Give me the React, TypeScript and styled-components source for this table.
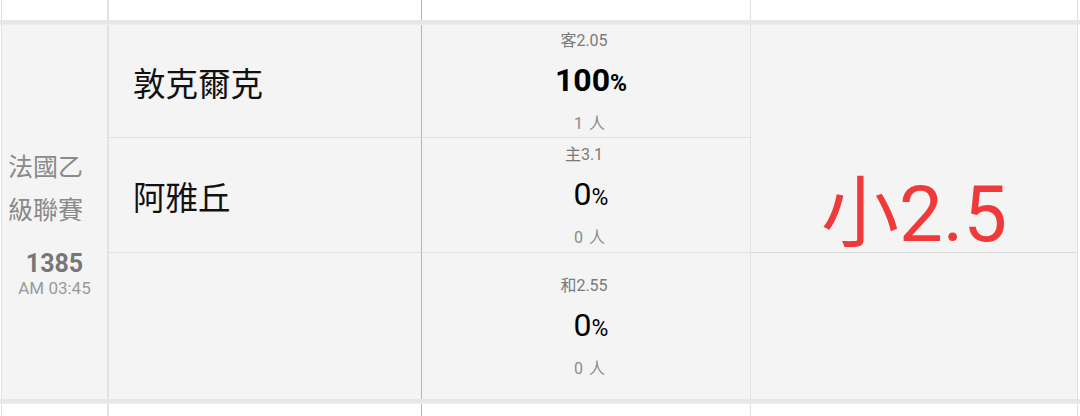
import React from 'react'
import styled, { createGlobalStyle } from 'styled-components'

const GlobalStyle = createGlobalStyle`
  *, *::before, *::after {
    box-sizing: border-box;
  }
  html, body {
    margin: 0;
    padding: 0;
    background: #ffffff;
    overflow: hidden;
  }
  body {
    font-family: Roboto, "Noto Sans CJK TC", "Noto Sans", sans-serif;
  }
`

const List = styled.div`
  width: 1080px;
  height: 416px;
  display: flex;
  flex-direction: column;
  overflow: hidden;
`

const Separator = styled.div`
  height: 5px;
  flex-shrink: 0;
  background: #e7e7e7;
  border-bottom: 1px solid #ededed;
`

const Row = styled.div<{ $height?: number; $filled?: boolean }>`
  display: flex;
  flex-shrink: 0;
  height: ${({ $height }) => ($height ? `${$height}px` : 'auto')};
  flex-grow: ${({ $height }) => ($height ? 0 : 1)};
  margin: 0 2px 0 1px;
  background: ${({ $filled }) => ($filled ? '#f4f4f4' : '#ffffff')};
  border-left: 1px solid #e0e0e0;
  border-right: 1px solid #e0e0e0;
`

const LeagueCell = styled.div`
  width: 107px;
  flex-shrink: 0;
  display: flex;
  flex-direction: column;
  justify-content: center;
  padding-top: 20px;
  border-right: 2px solid #e2e2e2;
`

const LeagueName = styled.div`
  width: 92px;
  padding-left: 6px;
  font-size: 25px;
  line-height: 43px;
  color: #8a8a8a;
`

const MatchNo = styled.div`
  margin-top: 18px;
  text-align: center;
  font-size: 25px;
  line-height: 28px;
  font-weight: 700;
  color: #777777;
`

const MatchTime = styled.div`
  text-align: center;
  font-size: 17px;
  line-height: 20px;
  color: #9a9a9a;
`

const Board = styled.div`
  display: grid;
  grid-template-columns: 313px 329px;
  grid-template-rows: 113px 115px 1fr;
`

const TeamCell = styled.div<{ $last?: boolean }>`
  display: flex;
  align-items: center;
  padding-left: 24px;
  font-size: 32.5px;
  color: #111111;
  border-right: 1px solid #b4b4b4;
  border-bottom: ${({ $last }) => ($last ? 'none' : '1px solid #e0e0e0')};
`

const OddsCell = styled.div<{ $last?: boolean }>`
  display: flex;
  flex-direction: column;
  align-items: center;
  justify-content: center;
  gap: 9px;
  padding-top: 3px;
  border-right: 1px solid #e2e2e2;
  border-bottom: ${({ $last }) => ($last ? 'none' : '1px solid #e0e0e0')};
`

const OddsLabel = styled.div`
  font-size: 16px;
  line-height: 20px;
  color: #7a7a7a;
  margin-left: -4px;
`

const Percent = styled.div<{ $strong?: boolean }>`
  font-size: 32px;
  line-height: 40px;
  font-weight: ${({ $strong }) => ($strong ? 700 : 400)};
  color: #000000;
  margin-left: 10px;

  small {
    font-size: 23px;
    font-weight: ${({ $strong }) => ($strong ? 700 : 400)};
  }
`

const Voters = styled.div`
  font-size: 16px;
  line-height: 22px;
  color: #8a8a8a;
  letter-spacing: 1px;
  margin-left: 8px;
`

const ResultCell = styled.div`
  flex: 1;
  display: grid;
  grid-template-rows: 228px 1fr;
  position: relative;
`

const ResultSplit = styled.div`
  border-bottom: 1px solid #dadada;
`

const ResultText = styled.div`
  position: absolute;
  inset: 0;
  display: flex;
  align-items: center;
  justify-content: center;
  padding-bottom: 10px;
  font-size: 78px;
  color: #f03a3a;
`

const EmptyCell = styled.div<{ $width?: number; $dark?: boolean }>`
  width: ${({ $width }) => ($width ? `${$width}px` : 'auto')};
  flex: ${({ $width }) => ($width ? '0 0 auto' : '1')};
  border-right: ${({ $dark, $width }) =>
    $width ? ($dark ? '1px solid #b4b4b4' : '1px solid #e2e2e2') : 'none'};
`

const EmptyLeague = styled(EmptyCell)`
  border-right: 2px solid #e2e2e2;
`

type Odds = {
  label: string
  percent: number
  voters: number
}

type Props = {
  league: string
  matchNo: string
  time: string
  teams: string[]
  odds: Odds[]
  result: string
}

const PartialRow: React.FC<{ height: number }> = ({ height }) => (
  <Row $height={height}>
    <EmptyLeague $width={107} />
    <EmptyCell $width={313} $dark />
    <EmptyCell $width={329} />
    <EmptyCell />
  </Row>
)

const MatchRow: React.FC<Props> = ({ league, matchNo, time, teams, odds, result }) => {
  const max = Math.max(...odds.map((o) => o.percent))
  return (
    <Row $filled>
      <LeagueCell>
        <LeagueName>{league}</LeagueName>
        <MatchNo>{matchNo}</MatchNo>
        <MatchTime>{time}</MatchTime>
      </LeagueCell>
      <Board>
        {odds.map((o, i) => (
          <React.Fragment key={o.label}>
            <TeamCell $last={i === odds.length - 1}>{teams[i] ?? ''}</TeamCell>
            <OddsCell $last={i === odds.length - 1}>
              <OddsLabel>{o.label}</OddsLabel>
              <Percent $strong={o.percent === max && max > 0}>
                {o.percent}
                <small>%</small>
              </Percent>
              <Voters>{o.voters} 人</Voters>
            </OddsCell>
          </React.Fragment>
        ))}
      </Board>
      <ResultCell>
        <ResultSplit />
        <div />
        <ResultText>{result}</ResultText>
      </ResultCell>
    </Row>
  )
}

const App: React.FC = () => (
  <>
    <GlobalStyle />
    <List>
      <PartialRow height={20} />
      <Separator />
      <MatchRow
        league="法國乙級聯賽"
        matchNo="1385"
        time="AM 03:45"
        teams={['敦克爾克', '阿雅丘']}
        odds={[
          { label: '客2.05', percent: 100, voters: 1 },
          { label: '主3.1', percent: 0, voters: 0 },
          { label: '和2.55', percent: 0, voters: 0 },
        ]}
        result="小2.5"
      />
      <Separator />
      <PartialRow height={12} />
    </List>
  </>
)

export default App
